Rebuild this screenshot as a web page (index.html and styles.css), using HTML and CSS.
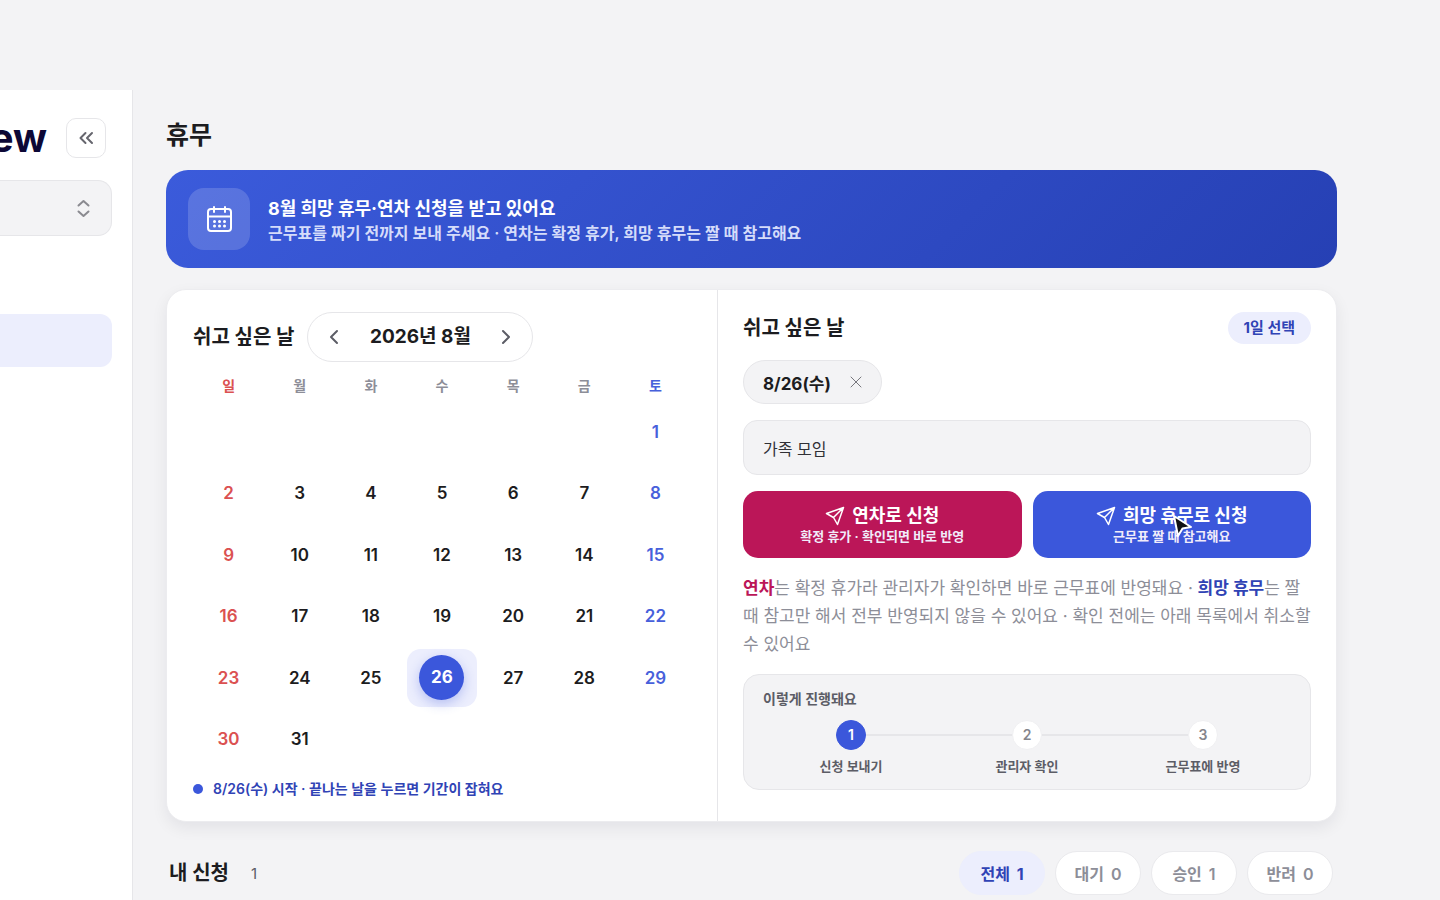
FILE: index.html
```html
<!DOCTYPE html>
<html lang="ko">
<head>
    <meta charset="UTF-8">
    <meta name="viewport" content="width=device-width, initial-scale=1.0">
    <title>휴무</title>
    <link rel="stylesheet" href="styles.css">
</head>
<body>
    <aside class="sidebar">
        <div class="sidebar-top">
            <span class="logo">ew</span>
            <button type="button" class="collapse-btn" aria-label="사이드바 접기">
                <svg width="20" height="20" viewBox="0 0 20 20"><path d="M9.500 5 4.500 10l5 5M16 5l-5 5 5 5"/></svg>
            </button>
        </div>
        <button type="button" class="store-select" aria-label="매장 선택">
            <svg width="20" height="20" viewBox="0 0 20 20"><path d="m5.500 7.500 5-4.500 5 4.500M5.500 13.500l5 4.500 5-4.500"/></svg>
        </button>
        <a href="#" class="nav-item active" aria-label="휴무"></a>
    </aside>

    <main>
        <h1>휴무</h1>

        <section class="banner">
            <div class="banner-icon">
                <svg width="30" height="30" viewBox="0 0 30 30">
                    <rect x="4" y="5" width="23" height="22" rx="3"/>
                    <path d="M4 12.500h23M10 3v5M21 3v5"/>
                    <path class="dots" d="M10.500 17.500h.01M15.500 17.500h.01M20.500 17.500h.01M10.500 22h.01M15.500 22h.01M20.500 22h.01"/>
                </svg>
            </div>
            <div class="banner-text">
                <h2>8월 희망 휴무·연차 신청을 받고 있어요</h2>
                <p>근무표를 짜기 전까지 보내 주세요 · 연차는 확정 휴가, 희망 휴무는 짤 때 참고해요</p>
            </div>
        </section>

        <section class="card">
            <div class="calendar-pane">
                <div class="calendar-head">
                    <h3>쉬고 싶은 날</h3>
                    <div class="month-nav">
                        <button type="button" aria-label="이전 달"><svg width="20" height="20" viewBox="0 0 20 20"><path d="m13 4-6 6 6 6"/></svg></button>
                        <span>2026년 8월</span>
                        <button type="button" aria-label="다음 달"><svg width="20" height="20" viewBox="0 0 20 20"><path d="m7 4 6 6-6 6"/></svg></button>
                    </div>
                </div>
                <table class="calendar">
                    <thead>
                        <tr><th>일</th><th>월</th><th>화</th><th>수</th><th>목</th><th>금</th><th>토</th></tr>
                    </thead>
                    <tbody id="calendar-days"></tbody>
                </table>
                <p class="hint">8/26(수) 시작 · 끝나는 날을 누르면 기간이 잡혀요</p>
            </div>

            <form class="request-pane">
                <div class="request-head">
                    <h3>쉬고 싶은 날</h3>
                    <span class="badge">1일 선택</span>
                </div>
                <div class="chip">
                    8/26(수)
                    <button type="button" aria-label="8/26(수) 삭제"><svg width="14" height="14" viewBox="0 0 14 14"><path d="m2 2 10 10M12 2 2 12"/></svg></button>
                </div>
                <input type="text" class="reason" aria-label="사유" value="가족 모임">
                <div class="actions">
                    <button type="button" class="btn-annual">
                        <span class="btn-title"><svg width="20" height="20" viewBox="0 0 20 20"><path d="M18.500 1.500 1.500 7.500l7 4 4 7zM18.500 1.500l-10 10"/></svg>연차로 신청</span>
                        <small>확정 휴가 · 확인되면 바로 반영</small>
                    </button>
                    <button type="button" class="btn-wish">
                        <span class="btn-title"><svg width="20" height="20" viewBox="0 0 20 20"><path d="M18.500 1.500 1.500 7.500l7 4 4 7zM18.500 1.500l-10 10"/></svg>희망 휴무로 신청</span>
                        <small>근무표 짤 때 참고해요</small>
                        <svg class="cursor" width="22" height="26" viewBox="0 0 22 26"><path d="m2 2 4 20 4.500-7.500L19 13z"/></svg>
                    </button>
                </div>
                <p class="notice"><strong class="annual">연차</strong>는 확정 휴가라 관리자가 확인하면 바로 근무표에 반영돼요 · <strong class="wish">희망 휴무</strong>는 짤 때 참고만 해서 전부 반영되지 않을 수 있어요 · 확인 전에는 아래 목록에서 취소할 수 있어요</p>
                <div class="process">
                    <h4>이렇게 진행돼요</h4>
                    <ol>
                        <li class="current"><div class="step"><span>1</span></div>신청 보내기</li>
                        <li><div class="step"><span>2</span></div>관리자 확인</li>
                        <li><div class="step"><span>3</span></div>근무표에 반영</li>
                    </ol>
                </div>
            </form>
        </section>

        <section class="requests">
            <h3>내 신청</h3>
            <span class="count">1</span>
            <div class="filters">
                <button type="button" class="active">전체 <span>1</span></button>
                <button type="button">대기 <span>0</span></button>
                <button type="button">승인 <span>1</span></button>
                <button type="button">반려 <span>0</span></button>
            </div>
        </section>
    </main>

    <script>
        // 2026년 8월 달력 그리기
        const body = document.getElementById('calendar-days');
        const firstDay = new Date(2026, 7, 1).getDay();
        const lastDate = new Date(2026, 8, 0).getDate();
        const selected = 26;

        for (let start = 1 - firstDay; start <= lastDate; start += 7) {
            const row = document.createElement('tr');
            for (let date = start; date < start + 7; date++) {
                const cell = document.createElement('td');
                if (date > 0 && date <= lastDate) {
                    cell.innerHTML = `<button type="button"><span>${date}</span></button>`;
                    if (date === selected) cell.className = 'selected';
                }
                row.appendChild(cell);
            }
            body.appendChild(row);
        }
    </script>
</body>
</html>
```
FILE: styles.css
```css
:root {
    --primary: #3b57db;
    --primary-dark: #3043b5;
    --primary-light: #eceefd;
    --annual: #bb1658;
    --text: #1c1c20;
    --text-sub: #5c5d66;
    --text-muted: #8d8e98;
    --background: #f3f3f5;
    --border: #e6e6e9;
    --sunday: #db5151;
    --saturday: #4760db;
}

* {
    box-sizing: border-box;
}

body {
    margin: 0;
    padding-top: 90px;
    min-height: 100vh;
    display: flex;
    font-family: Inter, "Noto Sans CJK KR", sans-serif;
    font-size: 16px;
    color: var(--text);
    background-color: var(--background);
}

h1, h2, h3, h4, p, ol {
    margin: 0;
    padding: 0;
}

button {
    font: inherit;
    color: inherit;
    border: none;
    padding: 0;
    background: none;
    cursor: pointer;
}

svg {
    display: block;
    fill: none;
    stroke: currentColor;
    stroke-width: 2;
    stroke-linecap: round;
    stroke-linejoin: round;
}

/* Sidebar */
.sidebar {
    width: 133px;
    flex-shrink: 0;
    padding: 28px 20px 0 0;
    background-color: #fff;
    border-right: 1px solid var(--border);
}

.sidebar-top {
    display: flex;
    justify-content: flex-end;
    align-items: center;
    gap: 19px;
    padding-right: 6px;
    overflow: hidden;
}

.logo {
    font-size: 40px;
    font-weight: 700;
    line-height: 40px;
    color: #0d0836;
}

.collapse-btn {
    width: 40px;
    height: 40px;
    flex-shrink: 0;
    display: grid;
    place-items: center;
    border: 1px solid var(--border);
    border-radius: 10px;
    color: #66666e;
}

.store-select {
    width: 100%;
    height: 56px;
    margin-top: 22px;
    padding-right: 18px;
    display: flex;
    justify-content: flex-end;
    align-items: center;
    background-color: var(--background);
    border: 1px solid var(--border);
    border-left: none;
    border-radius: 0 14px 14px 0;
    color: #8a8a90;
}

.nav-item {
    display: block;
    height: 53px;
    margin-top: 78px;
    border-radius: 0 12px 12px 0;
}

.nav-item.active {
    background-color: var(--primary-light);
}

/* Main */
main {
    flex: 1;
    padding: 27px 103px 4px 33px;
}

h1 {
    font-size: 25px;
    line-height: 36px;
    margin-bottom: 17px;
}

h3 {
    font-size: 20px;
    line-height: 32px;
}

.banner {
    display: flex;
    align-items: center;
    gap: 18px;
    padding: 18px 22px;
    margin-bottom: 21px;
    border-radius: 22px;
    color: #fff;
    background: linear-gradient(135deg, #3b5bdb, #2640b4);
}

.banner-icon {
    width: 62px;
    height: 62px;
    display: grid;
    place-items: center;
    border-radius: 16px;
    background-color: rgba(255, 255, 255, 0.16);
}

.banner-icon .dots {
    stroke-width: 3;
}

.banner-text {
    padding-top: 3px;
}

.banner h2 {
    font-size: 18px;
    line-height: 24px;
}

.banner p {
    font-size: 16px;
    font-weight: 600;
    line-height: 24px;
    color: #d5dcfa;
}

.card {
    display: grid;
    grid-template-columns: 551px 1fr;
    background-color: #fff;
    border: 1px solid #ececef;
    border-radius: 20px;
    box-shadow: 0 6px 16px rgba(20, 20, 40, 0.07);
}

/* Calendar */
.calendar-pane {
    padding: 22px 26px;
    border-right: 1px solid var(--border);
}

.calendar-head {
    display: flex;
    align-items: center;
    gap: 13px;
}

.month-nav {
    width: 226px;
    height: 50px;
    padding: 0 16px;
    display: flex;
    justify-content: space-between;
    align-items: center;
    border: 1px solid var(--border);
    border-radius: 25px;
    font-size: 19px;
    font-weight: 700;
    line-height: 24px;
}

.month-nav svg {
    color: #5c5d66;
}

.calendar {
    width: 100%;
    height: 408px;
    table-layout: fixed;
    border-collapse: collapse;
}

.calendar th {
    height: 39px;
    padding: 9px 0 0;
    font-size: 14px;
    font-weight: 600;
    line-height: 30px;
    color: var(--text-muted);
}

.calendar tbody {
    font-size: 17px;
    font-weight: 600;
}

.calendar td {
    padding: 1px;
}

.calendar tr > :first-child {
    color: var(--sunday);
}

.calendar tr > :last-child {
    color: var(--saturday);
}

.calendar td button {
    width: 100%;
    height: 58px;
    display: grid;
    place-items: center;
    border-radius: 14px;
}

.calendar .selected button {
    background-color: var(--primary-light);
}

.calendar .selected span {
    width: 45px;
    line-height: 45px;
    border-radius: 50%;
    font-weight: 700;
    color: #fff;
    background-color: var(--primary);
    box-shadow: 0 4px 12px rgba(59, 87, 219, 0.3);
}

.hint {
    display: flex;
    align-items: center;
    gap: 10px;
    margin-top: 9px;
    font-size: 14px;
    font-weight: 600;
    line-height: 20px;
    color: var(--primary-dark);
}

.hint::before {
    content: "";
    width: 10px;
    height: 10px;
    border-radius: 50%;
    background-color: var(--primary);
}

/* Request form */
.request-pane {
    display: flex;
    flex-direction: column;
    gap: 16px;
    padding: 22px 25px;
}

.request-head {
    display: flex;
    justify-content: space-between;
}

.badge {
    padding: 0 16px;
    border-radius: 16px;
    font-size: 15px;
    font-weight: 700;
    line-height: 32px;
    color: var(--primary-dark);
    background-color: var(--primary-light);
}

.chip {
    align-self: flex-start;
    height: 44px;
    padding: 0 18px 0 19px;
    display: flex;
    align-items: center;
    gap: 18px;
    border: 1px solid var(--border);
    border-radius: 22px;
    font-size: 17px;
    font-weight: 700;
    background-color: var(--background);
}

.chip svg {
    stroke-width: 1;
    color: #77777d;
}

.reason {
    width: 100%;
    height: 55px;
    padding: 0 19px;
    border: 1px solid var(--border);
    border-radius: 14px;
    font: inherit;
    color: #303036;
    background-color: var(--background);
}

.actions {
    display: grid;
    grid-template-columns: 1fr 1fr;
    gap: 11px;
}

.actions button {
    position: relative;
    height: 67px;
    border-radius: 15px;
    color: #fff;
}

.btn-annual {
    background-color: var(--annual);
}

.btn-wish {
    background-color: var(--primary);
}

.btn-title {
    display: flex;
    justify-content: center;
    align-items: center;
    gap: 7px;
    font-size: 18px;
    font-weight: 700;
    line-height: 22px;
}

.btn-title svg {
    stroke-width: 1.500;
}

.actions small {
    display: block;
    font-size: 13px;
    font-weight: 600;
    line-height: 18px;
    color: #f1ecfa;
}

.cursor {
    position: absolute;
    top: 23px;
    left: 50%;
    fill: #101014;
    stroke: #fff;
}

.notice {
    font-size: 17px;
    line-height: 28px;
    color: var(--text-muted);
}

.notice .annual {
    color: var(--annual);
}

.notice .wish {
    color: var(--primary-dark);
}

.process {
    padding: 13px 19px;
    border: 1px solid var(--border);
    border-radius: 16px;
    color: var(--text-sub);
    background-color: var(--background);
}

.process h4 {
    margin-bottom: 10px;
    font-size: 14px;
    font-weight: 600;
    line-height: 22px;
}

.process ol {
    display: flex;
    list-style: none;
}

.process li {
    flex: 1;
    text-align: center;
    font-size: 13px;
    font-weight: 600;
    line-height: 20px;
}

.step {
    display: flex;
    align-items: center;
    margin-bottom: 6px;
}

.step::before,
.step::after {
    content: "";
    flex: 1;
    height: 2px;
    background-color: var(--border);
}

li:first-child .step::before,
li:last-child .step::after {
    background: none;
}

.step span {
    width: 30px;
    border: 1px solid #f0f0f2;
    border-radius: 50%;
    font-size: 14px;
    line-height: 28px;
    color: #85858c;
    background-color: #fff;
}

.current .step span {
    border-color: var(--primary);
    color: #fff;
    background-color: var(--primary);
}

/* My requests */
.requests {
    display: flex;
    align-items: center;
    padding: 0 4px 0 3px;
    margin-top: 29px;
}

.count {
    margin-left: 22px;
    font-size: 15px;
    color: var(--text-sub);
}

.filters {
    display: flex;
    gap: 10px;
    margin-left: auto;
}

.filters button {
    width: 86px;
    height: 44px;
    border: 1px solid #eaeaed;
    border-radius: 22px;
    font-weight: 600;
    color: var(--text-muted);
    background-color: #fff;
}

.filters button span {
    margin-left: 3px;
}

.filters .active {
    border-color: var(--primary-light);
    font-weight: 700;
    color: var(--primary-dark);
    background-color: var(--primary-light);
}
```
